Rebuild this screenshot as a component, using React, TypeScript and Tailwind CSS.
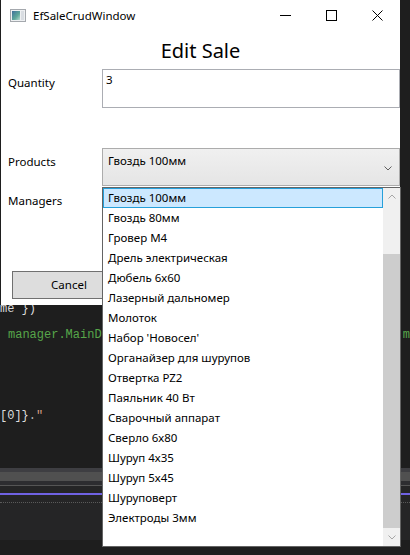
import React from "react";

const PRODUCTS = [
  "Гвоздь 100мм",
  "Гвоздь 80мм",
  "Гровер М4",
  "Дрель электрическая",
  "Дюбель 6х60",
  "Лазерный дальномер",
  "Молоток",
  "Набор 'Новосел'",
  "Органайзер для шурупов",
  "Отвертка PZ2",
  "Паяльник 40 Вт",
  "Сварочный аппарат",
  "Сверло 6х80",
  "Шуруп 4х35",
  "Шуруп 5х45",
  "Шуруповерт",
  "Электроды 3мм",
];

const ui = { fontFamily: '"Noto Sans", "Open Sans", sans-serif' };
const mono = { fontFamily: '"Liberation Mono", "DejaVu Sans Mono", monospace' };

function Chevron({ up = false, color = "#a6a6a6" }: { up?: boolean; color?: string }) {
  return (
    <svg width="8" height="5" viewBox="0 0 8 5">
      <path d={up ? "M0.5 4.5 L4 1 L7.5 4.5" : "M0.5 0.5 L4 4 L7.5 0.5"} fill="none" stroke={color} strokeWidth="1" />
    </svg>
  );
}

function TitleBar() {
  return (
    <div className="flex h-[31px] items-center">
      <svg className="ml-[9px] mr-[7px]" width="16" height="13" viewBox="0 0 16 13">
        <defs>
          <linearGradient id="ico" x1="0" x2="1" y1="0" y2="1">
            <stop offset="0" stopColor="#3f6f9a" />
            <stop offset="0.6" stopColor="#5fa89a" />
            <stop offset="1" stopColor="#b8d8d0" />
          </linearGradient>
        </defs>
        <rect x="0.5" y="0.5" width="15" height="12" fill="#eef0f2" stroke="#a4a8ad" />
        <rect x="2" y="2" width="8" height="9" fill="url(#ico)" />
        <rect x="11" y="2" width="3" height="9" fill="#d9dde2" />
      </svg>
      <span className="text-[11.5px] leading-[16px] text-black">EfSaleCrudWindow</span>
      <div className="ml-auto flex h-full items-center">
        <div className="flex w-[46px] justify-center">
          <svg width="11" height="1" viewBox="0 0 11 1">
            <rect width="11" height="1" fill="#000" />
          </svg>
        </div>
        <div className="flex w-[46px] justify-center">
          <svg width="11" height="11" viewBox="0 0 11 11">
            <rect x="0.5" y="0.5" width="10" height="10" fill="none" stroke="#000" />
          </svg>
        </div>
        <div className="flex w-[46px] justify-center">
          <svg width="11" height="11" viewBox="0 0 11 11">
            <path d="M0.5 0.5 L10.5 10.5 M10.5 0.5 L0.5 10.5" stroke="#000" strokeWidth="1" />
          </svg>
        </div>
      </div>
    </div>
  );
}

function EditWindow() {
  return (
    <div className="absolute left-[1px] top-0 flex h-[305px] w-[399px] flex-col bg-white text-black" style={ui}>
      <TitleBar />
      <div className="flex h-[38px] items-center justify-center text-[20px] leading-[27px]">Edit Sale</div>

      <div className="grid grid-cols-[101px_1fr] text-[11.5px] leading-[16px]">
        <div className="pl-[7px] pt-[6px]">Quantity</div>
        <div className="h-[39px] border border-[#abadb3] px-[3px] pt-[2px]">3</div>

        <div className="col-span-2 h-[40px]" />

        <div className="pl-[7px] pt-[6px]">Products</div>
        <div className="relative h-[38px] border border-[#acacac] bg-gradient-to-b from-[#f0f0f0] to-[#e5e5e5] px-[5px] pt-[4px]">
          Гвоздь 100мм
          <div className="absolute right-[7px] top-[17px]">
            <Chevron color="#606060" />
          </div>
        </div>

        <div className="pl-[7px] pt-[7px]">Managers</div>
        <div className="h-[85px]" />
      </div>

      <div className="pl-[11px]">
        <button className="flex h-[28px] w-[114px] items-center justify-center border border-[#707070] bg-[#dddddd] text-[11.5px] text-black">
          Cancel
        </button>
      </div>
    </div>
  );
}

function Dropdown() {
  return (
    <div className="absolute left-[102px] top-[187px] flex h-[360px] w-[299px] border border-[#646464] bg-white text-[11.5px] leading-[16px] text-black" style={ui}>
      <div className="flex-1">
        {PRODUCTS.map((p, i) => (
          <div
            key={p}
            className={
              i === 0
                ? "flex h-[20px] items-center border border-[#26a0da] bg-[#cce8ff] px-[4px]"
                : "flex h-[20px] items-center px-[5px]"
            }
          >
            {p}
          </div>
        ))}
      </div>
      <div className="flex w-[17px] flex-col bg-[#f0f0f0]">
        <div className="flex h-[17px] items-center justify-center">
          <Chevron up />
        </div>
        <div className="h-[49px]" />
        <div className="h-[274px] bg-[#cdcdcd]" />
        <div className="flex h-[18px] items-center justify-center">
          <Chevron />
        </div>
      </div>
    </div>
  );
}

export default function App() {
  return (
    <div className="relative flex h-[555px] w-[410px] flex-col overflow-hidden bg-[#1e1e1e]">
      <div className="h-[468px] pt-[300px] text-[12px] leading-[18px] whitespace-pre" style={mono}>
        <div className="h-[18px] text-[#dcdcdc]">me {"})"}</div>
        <div className="mt-[8px] flex h-[18px] justify-between pl-[8px] text-[#57a64a]">
          <span>manager.MainD</span>
          <span>m</span>
        </div>
        <div className="mt-[63px] h-[18px] text-[#dcdcdc]">
          [0]{"}"}<span className="text-[#b4b4b4]">.</span>
          <span className="text-[#d69d85]">"</span>
        </div>
      </div>
      <div className="h-[4px] bg-[#3e3e42]" />
      <div className="h-[9px] bg-[#505050]" />
      <div className="h-[4px] bg-[#2d2d30]" />
      <div className="h-[1px] bg-[#555555]" />
      <div className="h-[7px] bg-[#252526]" />
      <div className="h-[2px] bg-[#7062e3]" />
      <div className="h-[7px] bg-[#252526]" />
      <div className="h-[2px] border-t border-dotted border-[#5a5a5a] bg-[#252526]" />
      <div className="h-[36px] bg-[#252526]" />
      <div className="flex-1 bg-[#1e1e1e]" />

      <EditWindow />
      <Dropdown />
    </div>
  );
}
